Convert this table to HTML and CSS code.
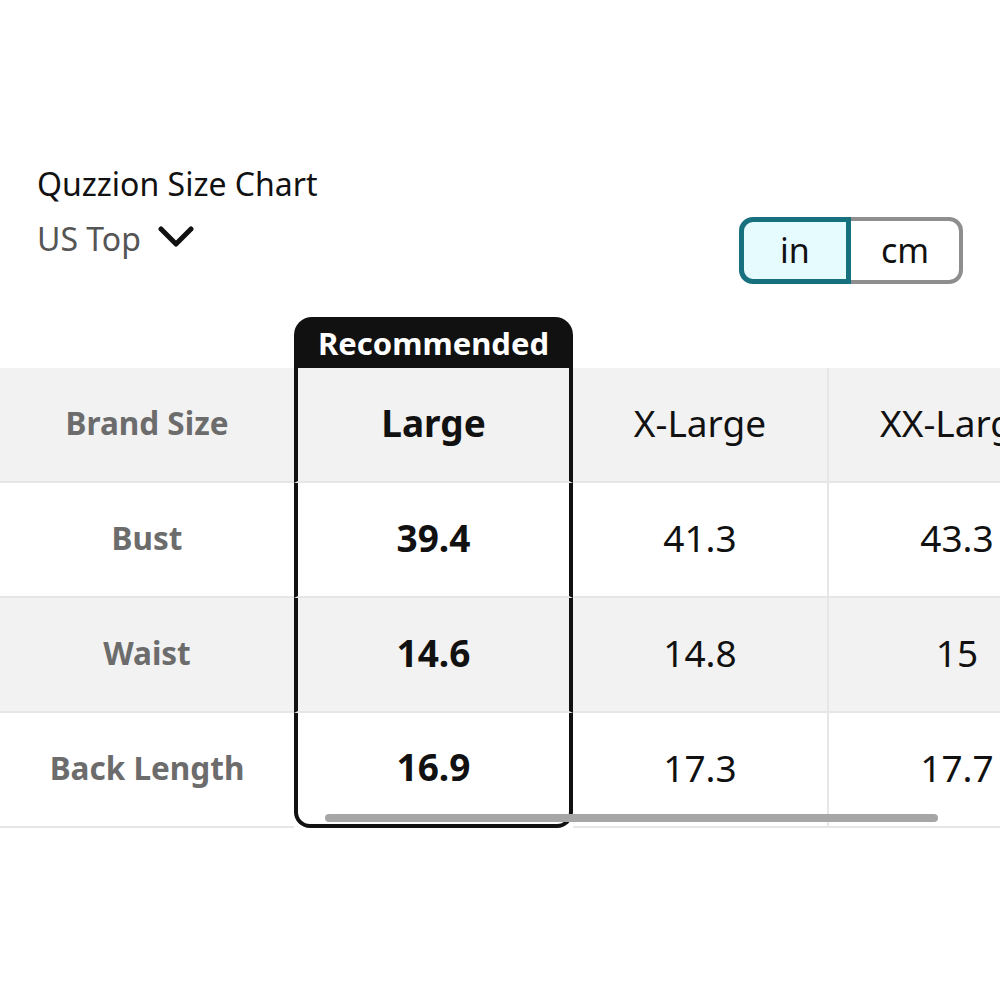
FILE: index.html
```html
<!DOCTYPE html>
<html>
<head>
<meta charset="utf-8">
<link rel="stylesheet" href="styles.css">
</head>
<body>
<div class="page">
  <div class="head">
    <div class="titles">
      <div class="title">Quzzion Size Chart</div>
      <div class="region">US Top
        <svg class="chev" width="36" height="24" viewBox="0 0 36 24"><path d="M3 4 L18 19 L33 4" fill="none" stroke="#111" stroke-width="5" stroke-linecap="round" stroke-linejoin="round"/></svg>
      </div>
    </div>
    <div class="toggle">
      <div class="seg seg-on">in</div>
      <div class="seg seg-off">cm</div>
    </div>
  </div>

  <div class="table-wrap">
    <div class="grid">
      <div class="tabcell"></div>
      <div class="tab">Recommended</div>
      <div class="tabcell"></div>
      <div class="tabcell"></div>

      <div class="cell label shade">Brand Size</div>
      <div class="cell rec shade">Large</div>
      <div class="cell val shade sep">X-Large</div>
      <div class="cell val shade">XX-Large</div>

      <div class="cell label">Bust</div>
      <div class="cell rec">39.4</div>
      <div class="cell val sep">41.3</div>
      <div class="cell val">43.3</div>

      <div class="cell label shade">Waist</div>
      <div class="cell rec shade">14.6</div>
      <div class="cell val shade sep">14.8</div>
      <div class="cell val shade">15</div>

      <div class="cell label">Back Length</div>
      <div class="cell rec last">16.9</div>
      <div class="cell val sep">17.3</div>
      <div class="cell val">17.7</div>
    </div>
    <div class="scrollbar"></div>
  </div>
</div>
</body>
</html>
```

FILE: styles.css
```css
html, body {
  margin: 0;
  padding: 0;
  background: #ffffff;
}
body {
  font-family: "Noto Sans", "Open Sans", sans-serif;
  color: #111111;
}
.page {
  width: 1000px;
  height: 1000px;
  overflow: hidden;
}
.head {
  display: flex;
  justify-content: space-between;
  align-items: flex-start;
  padding: 165px 37px 0 37px;
  height: 317px;
  box-sizing: border-box;
}
.title {
  font-size: 32px;
  line-height: 38px;
  color: #111;
}
.region {
  margin-top: 17px;
  font-size: 32px;
  line-height: 38px;
  color: #555;
  display: flex;
  align-items: center;
  gap: 17px;
}
.chev {
  display: block;
  margin-top: -4px;
}
.toggle {
  display: flex;
  margin-top: 52px;
  height: 67px;
}
.seg {
  width: 112px;
  box-sizing: border-box;
  display: flex;
  align-items: center;
  justify-content: center;
  font-size: 34px;
  color: #111;
  padding-bottom: 2px;
}
.seg-on {
  border: 5px solid #17707d;
  border-radius: 14px 0 0 14px;
  background: #e6fbfd;
}
.seg-off {
  border: 4px solid #8e8e8e;
  border-left: none;
  border-radius: 0 14px 14px 0;
  background: #fff;
}
.table-wrap {
  position: relative;
  width: 1000px;
  overflow: hidden;
}
.grid {
  display: grid;
  grid-template-columns: 294px 279px 256px 256px;
  width: 1085px;
}
.tabcell {
  height: 51px;
}
.tab {
  height: 51px;
  background: #111;
  color: #fff;
  border-radius: 18px 18px 0 0;
  font-weight: 700;
  font-size: 31px;
  display: flex;
  align-items: center;
  justify-content: center;
}
.cell {
  height: 115px;
  box-sizing: border-box;
  border-bottom: 2px solid #e6e6e6;
  padding-bottom: 4px;
  display: flex;
  align-items: center;
  justify-content: center;
  background: #ffffff;
}
.cell.shade {
  background: #f2f2f2;
}
.label {
  font-weight: 700;
  font-size: 31.5px;
  color: #6c6c6c;
}
.rec {
  font-weight: 700;
  font-size: 37px;
  color: #111;
  border-left: 4px solid #111;
  border-right: 4px solid #111;
}
.rec.last {
  border-bottom: 4px solid #111;
  border-radius: 0 0 16px 16px;
}
.val {
  font-size: 37px;
  color: #111;
}
.sep {
  border-right: 2px solid #e6e6e6;
}
.scrollbar {
  position: absolute;
  left: 325px;
  width: 613px;
  bottom: 6px;
  height: 8px;
  border-radius: 4px;
  background: #a6a6a6;
}
```
